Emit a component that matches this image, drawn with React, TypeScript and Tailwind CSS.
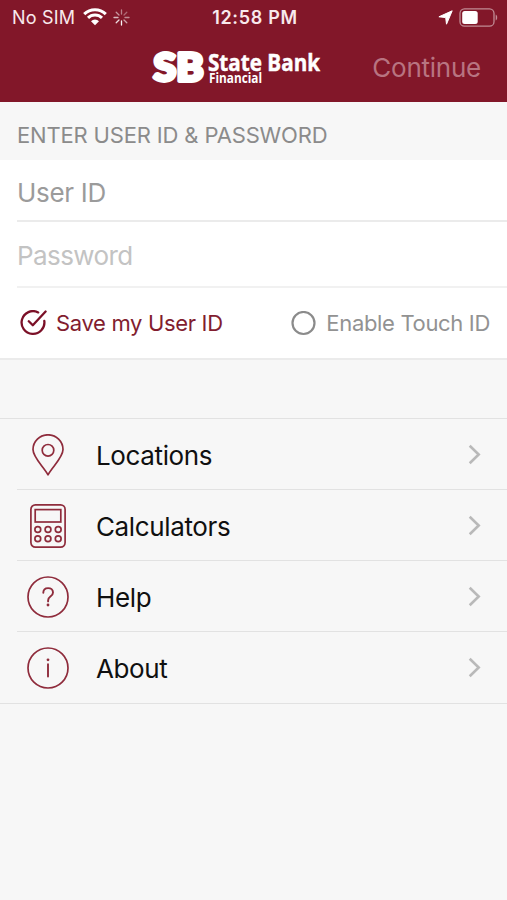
import type { ReactNode } from "react";

function StatusBar() {
  return (
    <div className="flex h-[34px] items-center pl-3 pr-[9px] text-[18px] leading-none text-[#f8e9ec]">
      <div className="flex flex-1 items-center">
        <span className="w-[71px] whitespace-nowrap pt-px tracking-[0.2px]">No SIM</span>
        <svg width="24" height="18" viewBox="0 0 24 18" fill="none" stroke="#fff" strokeWidth="3">
          <path d="M1.2 6.1a15.3 15.3 0 0 1 21.6 0" />
          <path d="M5 9.9a9.9 9.9 0 0 1 14 0" />
          <path d="M12 17.2 8 13.2a5.7 5.7 0 0 1 8 0z" fill="#fff" stroke="none" />
        </svg>
        <svg className="ml-[6px]" width="17" height="17" viewBox="0 0 17 17" stroke="#fff" strokeWidth="1.3" strokeLinecap="round">
          <path d="M8.5 1v4" opacity=".45" />
          <path d="m13.8 3.2-2.8 2.8" opacity=".35" />
          <path d="M16 8.5h-4" opacity=".5" />
          <path d="m13.8 13.8-2.8-2.8" opacity=".6" />
          <path d="M8.5 16v-4" opacity=".95" />
          <path d="m3.2 13.8 2.8-2.8" opacity=".85" />
          <path d="M1 8.5h4" opacity=".7" />
          <path d="m3.2 3.2 2.8 2.8" opacity=".55" />
        </svg>
      </div>
      <span className="pt-px font-semibold tracking-[0.7px]">12:58 PM</span>
      <div className="flex flex-1 items-center justify-end gap-[6px]">
        <svg width="15" height="15" viewBox="0 0 15 15" fill="#fff" stroke="#fff" strokeWidth="1" strokeLinejoin="round">
          <path d="M14.200.800 8.500 14.200 7.700 7.600.900 6.800z" />
        </svg>
        <svg width="39" height="19" viewBox="0 0 39 19" fill="none">
          <rect x="1" y=".8" width="34" height="17.400" rx="4.500" stroke="#fff" strokeOpacity=".5" strokeWidth="1.300" />
          <rect x="3.200" y="3" width="15.500" height="13" rx="2.500" fill="#fff" />
          <path d="M36.700 6.500c2 .8 2 5.200 0 6z" fill="#fff" fillOpacity=".5" />
        </svg>
      </div>
    </div>
  );
}

function Logo() {
  return (
    <svg className="overflow-visible" width="172" height="42" viewBox="0 0 172 42" fill="#fff">
      <text x="3.500" y="34" textLength="50" lengthAdjust="spacingAndGlyphs" fontFamily="Lato, sans-serif" fontSize="38.500" fontWeight="900" stroke="#fff" strokeWidth="3.800" strokeLinejoin="round">
        SB
      </text>
      <text x="58" y="24" textLength="112" lengthAdjust="spacingAndGlyphs" fontFamily="'Open Sans', sans-serif" fontSize="23.500" fontWeight="700" stroke="#fff" strokeWidth=".5">
        State Bank
      </text>
      <text x="59" y="36" textLength="53" lengthAdjust="spacingAndGlyphs" fontFamily="'Open Sans', sans-serif" fontSize="13.500" fontWeight="700">
        Financial
      </text>
    </svg>
  );
}

function CircleIcon({ children }: { children: ReactNode }) {
  return (
    <svg width="42" height="42" viewBox="0 0 42 42" fill="none" stroke="#8f2c3c" strokeWidth="1.700" strokeLinecap="round">
      <circle cx="21" cy="21" r="20" />
      {children}
    </svg>
  );
}

const menu = [
  {
    label: "Locations",
    icon: (
      <svg width="32" height="42" viewBox="0 0 32 42" fill="none" stroke="#8f2c3c" strokeWidth="1.700" strokeLinejoin="round">
        <path d="M16 40.800C11.500 32.500 1 23.500 1 15.500a15 14.700 0 0 1 30 0c0 8-10.500 17-15 25.300z" />
        <circle cx="16" cy="16.300" r="5.800" />
      </svg>
    ),
  },
  {
    label: "Calculators",
    icon: (
      <svg width="36" height="44" viewBox="0 0 36 44" fill="none" stroke="#8f2c3c" strokeWidth="1.700">
        <rect x=".9" y=".9" width="34.200" height="42.200" rx="4.500" />
        <rect x="5.200" y="5.600" width="25.600" height="12.400" />
        {[25.5, 34.7].map((cy) =>
          [7.8, 18, 28.2].map((cx) => <circle key={`${cx}-${cy}`} cx={cx} cy={cy} r="2.900" />)
        )}
      </svg>
    ),
  },
  {
    label: "Help",
    icon: (
      <CircleIcon>
        <path d="M16.300 16.800c0-2.900 2-4.700 4.800-4.700s4.900 1.700 4.900 4.300c0 2.200-1.200 3.200-2.600 4.200-1.500 1.100-2.300 2-2.300 4v.8" strokeWidth="1.900" />
        <circle cx="21" cy="29" r="1.400" fill="#8f2c3c" stroke="none" />
      </CircleIcon>
    ),
  },
  {
    label: "About",
    icon: (
      <CircleIcon>
        <path d="M21 17.200v12.300" strokeWidth="1.900" />
        <circle cx="21" cy="12.800" r="1.400" fill="#8f2c3c" stroke="none" />
      </CircleIcon>
    ),
  },
];

export default function App() {
  return (
    <div className="min-h-[900px] w-full bg-[#f7f7f7] font-[Inter,sans-serif]">
      <header className="h-[102px] bg-[#821729]">
        <StatusBar />
        <div className="grid h-[68px] grid-cols-[150px_1fr_auto] items-center pr-[26px]">
          <span />
          <Logo />
          <button className="text-[26px] leading-none tracking-[-0.25px] text-[#b87481]">Continue</button>
        </div>
      </header>

      <h2 className="flex h-[58px] items-center pl-[17px] pt-[7px] text-[22px] leading-none tracking-[-0.16px] text-[#8b8b8b]">
        ENTER USER ID &amp; PASSWORD
      </h2>

      <section className="border-b-2 border-[#ebebeb] bg-white">
        <div className="pl-[17px]">
          <div className="flex h-[62px] items-center border-b-2 border-[#ebebeb] pt-[6px] text-[26px] leading-none tracking-[-0.3px] text-[#9b9b9b]">
            User ID
          </div>
          <div className="flex h-[66px] items-center border-b-2 border-[#f1f1f1] pt-1 text-[26px] leading-none tracking-[-0.6px] text-[#c3c3c3]">
            Password
          </div>
        </div>
        <div className="flex h-[70px] items-center justify-between pl-5 pr-[17px] text-[22px] leading-none tracking-[-0.33px]">
          <div className="flex items-center gap-2 text-[#821d2f]">
            <svg width="28" height="26" viewBox="0 0 28 26" fill="none" stroke="#7b1027" strokeWidth="2.300" strokeLinecap="round" strokeLinejoin="round">
              <path d="M18.200 2.400A11.400 11.400 0 1 0 24.300 11" />
              <path d="m8.800 11.200 4 4L25.600 1.500" />
            </svg>
            <span className="pb-px">Save my User ID</span>
          </div>
          <div className="flex items-center gap-[10px] text-[#929292]">
            <svg width="25" height="25" viewBox="0 0 25 25" fill="none" stroke="#8b8b8b" strokeWidth="2.200">
              <circle cx="12.500" cy="12" r="11" />
            </svg>
            <span className="pb-px">Enable Touch ID</span>
          </div>
        </div>
      </section>

      <nav className="mt-[58px] border-y border-[#e2e2e2]">
        {menu.map(({ label, icon }, i) => (
          <div key={label} className="pl-[17px]">
            <div
              className={`flex items-center pr-[26px] ${i < menu.length - 1 ? "h-[71px] border-b border-[#e2e2e2]" : "h-[71px]"}`}
            >
              <span className="flex w-[62px] justify-center pt-px">{icon}</span>
              <span className="ml-[17px] flex-1 pt-[3px] text-[26px] leading-none tracking-[-0.37px] text-[#101010]">{label}</span>
              <svg width="13" height="21" viewBox="0 0 13 21" fill="none" stroke="#b9b9b9" strokeWidth="2.600">
                <path d="m1.700 1.700 9 8.800-9 8.800" />
              </svg>
            </div>
          </div>
        ))}
      </nav>
    </div>
  );
}
